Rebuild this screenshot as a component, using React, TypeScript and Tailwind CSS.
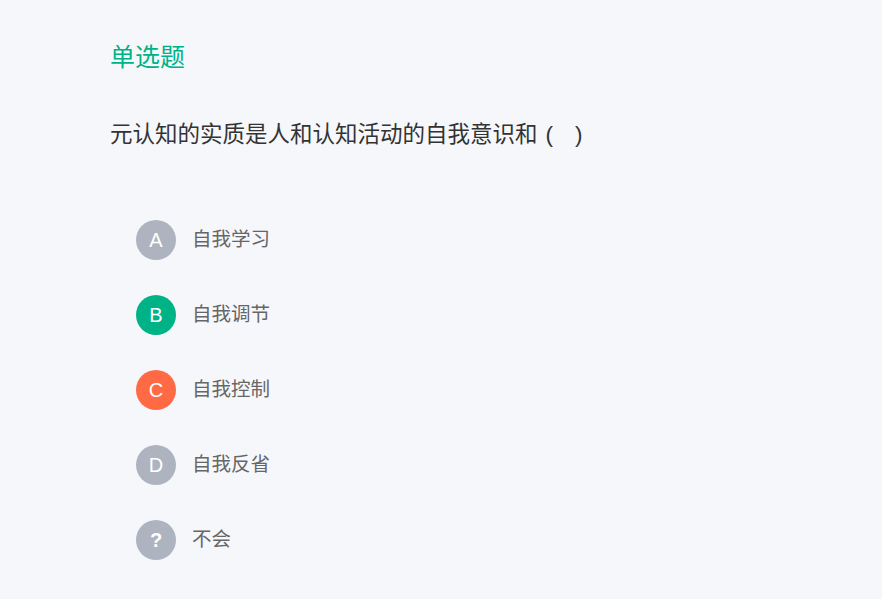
import React from "react";

const options = [
  { k: "A", t: "自我学习", c: "bg-[#adb4c0]" },
  { k: "B", t: "自我调节", c: "bg-[#00b386]" },
  { k: "C", t: "自我控制", c: "bg-[#ff6a45]" },
  { k: "D", t: "自我反省", c: "bg-[#adb4c0]" },
  { k: "?", t: "不会", c: "bg-[#adb4c0]" },
];

export default function App() {
  return (
    <div
      className="w-[882px] h-[599px] bg-[#f6f7fb] overflow-hidden pl-[110px] pt-[44px]"
      style={{ fontFamily: '"Liberation Sans", "Noto Sans CJK SC", sans-serif' }}
    >
      <div className="text-[25px] leading-[26px] text-[#00b386] h-[26px]">单选题</div>
      <div className="mt-[50px] text-[22.5px] leading-[30px] text-[#333333] h-[30px] whitespace-nowrap">
        元认知的实质是人和认知活动的自我意识和
        <span className="ml-[8px]">(</span>
        <span className="ml-[22px]">)</span>
      </div>
      <div className="mt-[70px] pl-[26px] flex flex-col gap-[35px]">
        {options.map((o) => (
          <div key={o.k} className="flex items-center h-[40px]">
            <div
              className={`w-[40px] h-[40px] rounded-full ${o.c} flex items-center justify-center text-white text-[20px] ${o.k === "?" ? "font-bold" : ""}`}
            >
              {o.k}
            </div>
            <div className="ml-[16px] text-[19.5px] text-[#666666]">{o.t}</div>
          </div>
        ))}
      </div>
    </div>
  );
}
